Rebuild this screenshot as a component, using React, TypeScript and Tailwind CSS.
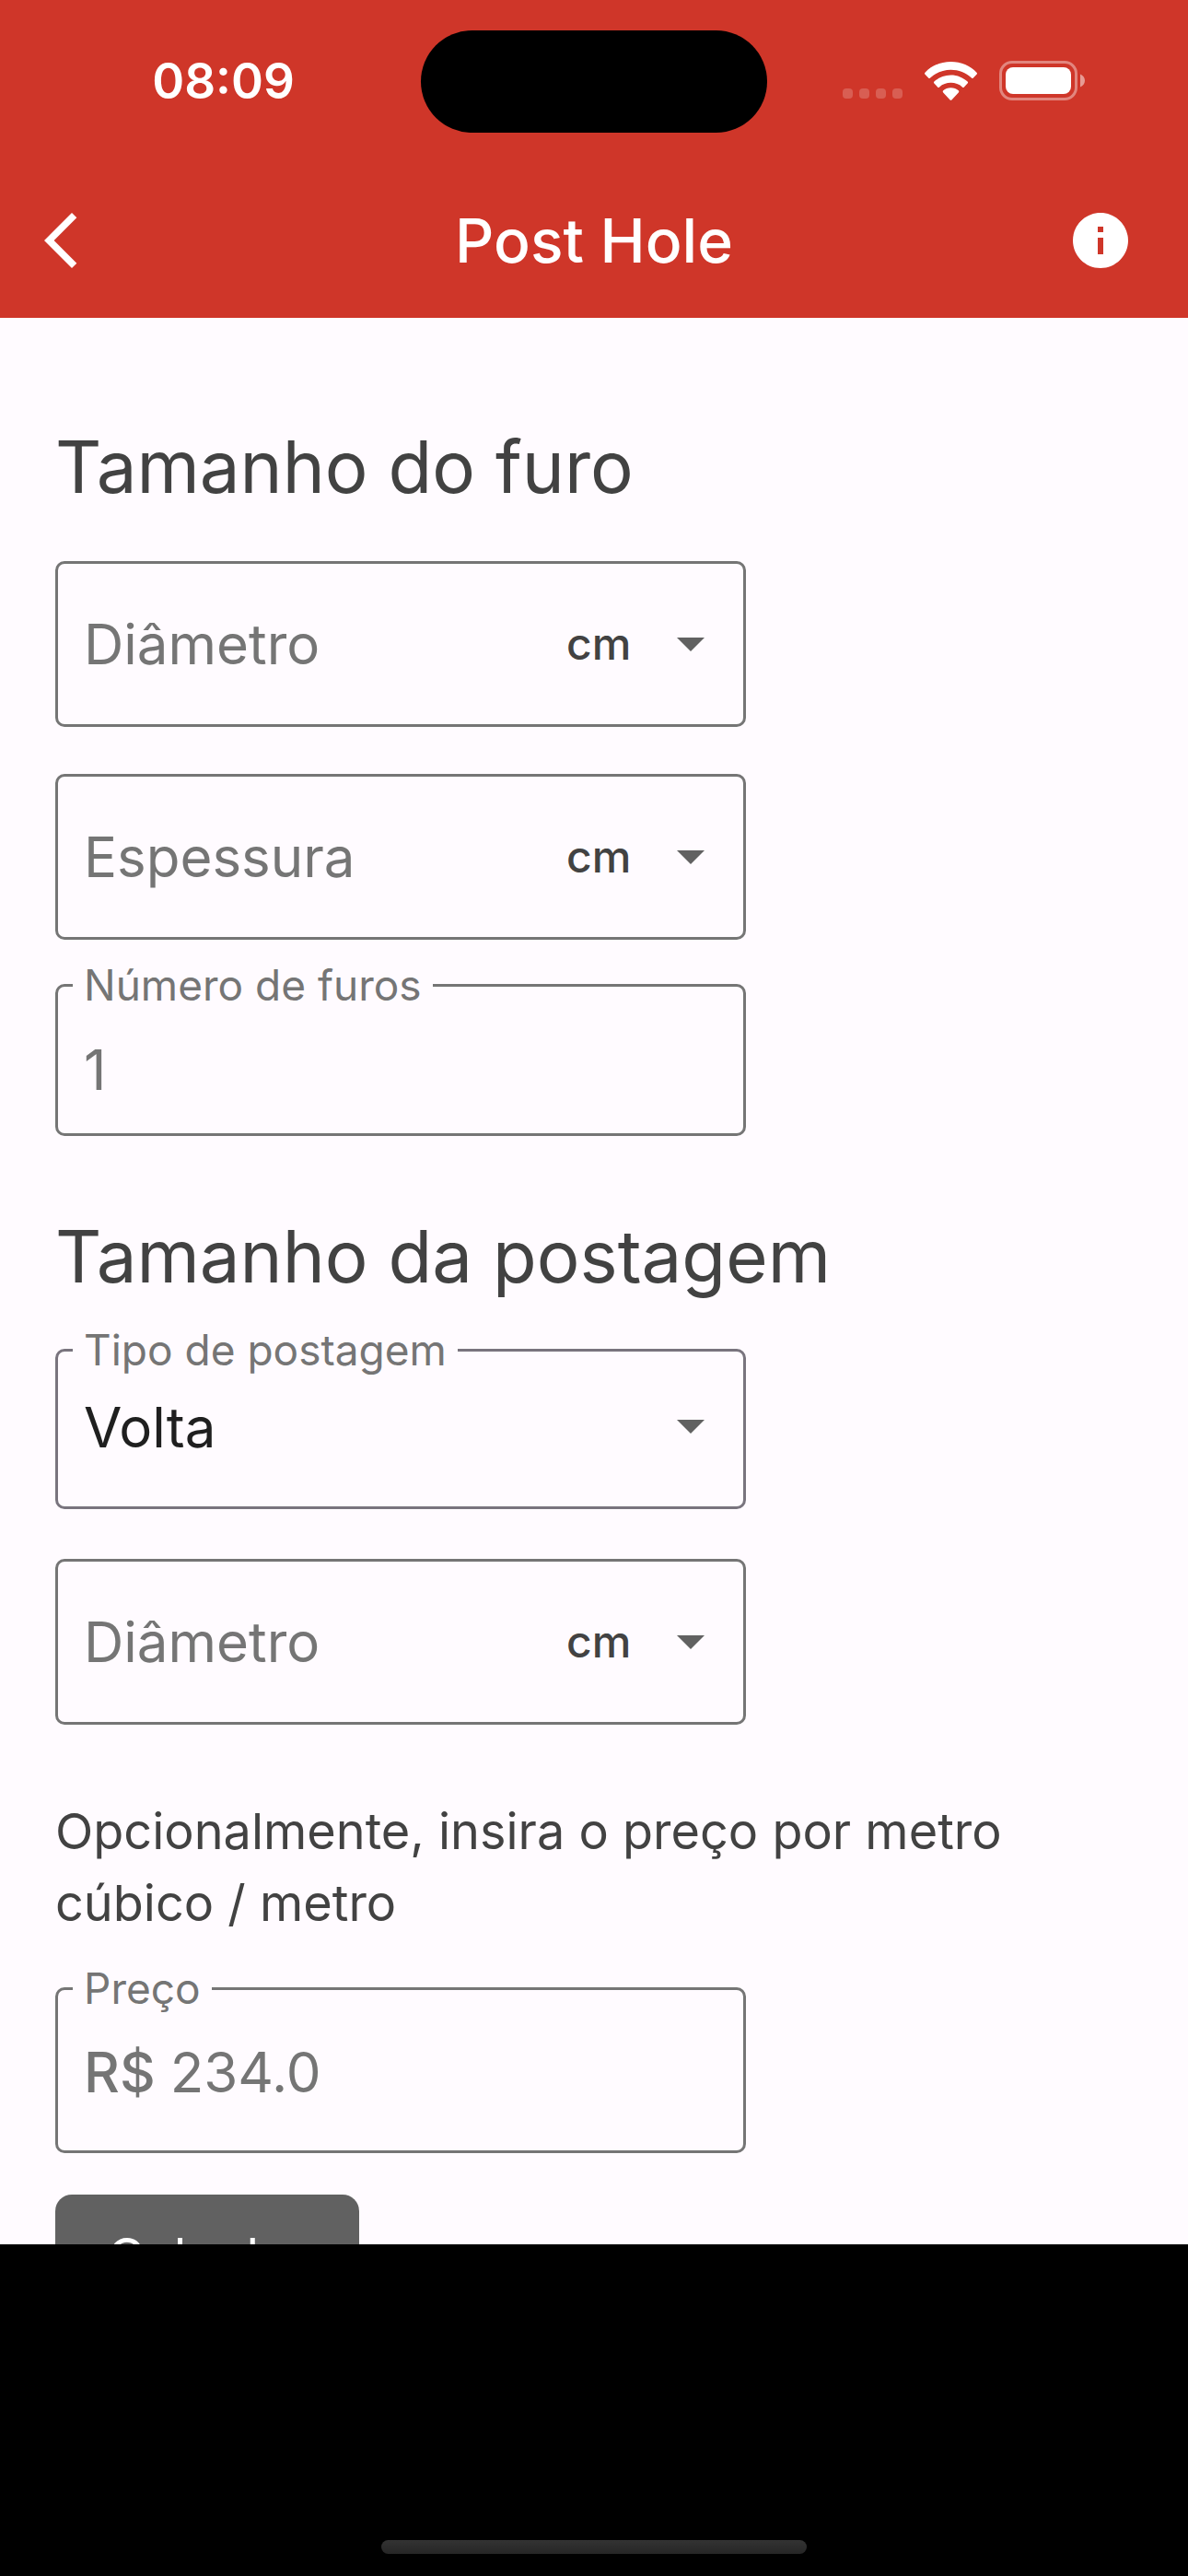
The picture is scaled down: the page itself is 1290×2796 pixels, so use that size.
import type { ReactNode } from "react";
import { MdArrowBackIosNew, MdInfo } from "react-icons/md";

const lengthUnits = ["cm", "m", "mm", "in", "ft"];
const postTypes = ["Volta", "Quadrado", "Retângulo"];

function StatusBar() {
  return (
    <div className="grid h-[177px] grid-cols-[1fr_376px_1fr] items-center">
      <span className="pb-0.5 pl-7 text-center text-[53px] leading-[60px] font-semibold">08:09</span>
      <div className="h-[111px] rounded-full bg-black" />
      <div className="flex items-center justify-center gap-6 pr-[30px] pb-0.5">
        <div className="flex gap-[7px] pt-7">
          {Array.from({ length: 4 }).map((_, i) => (
            <span key={i} className="size-[11px] rounded-[4px] bg-white/20" />
          ))}
        </div>
        <svg viewBox="0 0 57 42" className="h-[42px] w-[57px] fill-white" aria-hidden="true">
          <path d="M28.5 0C39.5 0 49.600 4.200 56.500 11.700q1 1 0 2.100l-3.600 3.700q-1 1-2 0C44.800 11.900 37 8.700 28.500 8.700S12.200 11.900 6.100 17.500q-1 1-2 0L.5 13.800q-1-1.100 0-2.100C7.400 4.200 17.500 0 28.500 0z" />
          <path d="M28.500 14.400c7 0 13.300 2.600 18.100 7.200q1 1 0 2l-3.700 3.800q-1 1-2 0c-3.400-3-7.700-4.600-12.400-4.600s-9 1.600-12.400 4.600q-1 1-2 0l-3.700-3.800q-1-1 0-2c4.800-4.600 11.100-7.200 18.100-7.200z" />
          <path d="M28.500 28.300c3.200 0 6.100 1.100 8.300 3q1 1 0 2.100l-7.200 7.800q-1.100 1.100-2.200 0l-7.200-7.800q-1-1.100 0-2.100c2.200-1.900 5.100-3 8.300-3z" />
        </svg>
        <svg viewBox="0 0 93 43" className="h-[43px] w-[93px]" aria-hidden="true">
          <rect x="1.500" y="1.500" width="82" height="40" rx="12.500" fill="none" stroke="#fff" strokeOpacity=".4" strokeWidth="3" />
          <rect x="7" y="7" width="71" height="29" rx="8" fill="#fff" />
          <path d="M88 14.500c3 1.200 5 4 5 7s-2 5.800-5 7z" fill="#fff" fillOpacity=".5" />
        </svg>
      </div>
    </div>
  );
}

function AppBar() {
  return (
    <div className="grid h-42 grid-cols-[1fr_auto_1fr] items-center px-[30px]">
      <button type="button" aria-label="Voltar" className="size-18">
        <MdArrowBackIosNew className="size-18" />
      </button>
      <h1 className="text-[66px] leading-[84px] font-medium">Post Hole</h1>
      <button type="button" aria-label="Informações" className="mr-[29px] size-18 justify-self-end">
        <MdInfo className="size-18" />
      </button>
    </div>
  );
}

function Caret() {
  return (
    <svg viewBox="0 0 30 15" className="pointer-events-none absolute right-0 h-[15px] w-[30px] fill-[#616161]" aria-hidden="true">
      <path d="M0 0h30L15 15z" />
    </svg>
  );
}

function UnitField({ id, label }: { id: string; label: string }) {
  return (
    <div className="flex h-45 w-full max-w-[750px] items-center rounded-[10px] border-3 border-[#757575] pr-[42px] pl-7">
      <input
        id={id}
        aria-label={label}
        placeholder={label}
        className="min-w-0 flex-1 text-[60px] leading-[72px] outline-none placeholder:text-[#757575]"
      />
      <div className="relative flex items-center">
        <select
          aria-label={`Unidade: ${label}`}
          className="w-[150px] appearance-none text-[48px] leading-[60px] font-medium text-[#424242] outline-none"
        >
          {lengthUnits.map((unit) => (
            <option key={unit}>{unit}</option>
          ))}
        </select>
        <Caret />
      </div>
    </div>
  );
}

// Legend is 57px tall, so the border line sits 27px below the top of the fieldset
function OutlinedField({ id, label, className, children }: { id: string; label: string; className: string; children: ReactNode }) {
  return (
    <fieldset className={`w-full max-w-[750px] min-w-0 rounded-[10px] border-3 pr-[42px] pl-4 ${className}`}>
      <legend className="px-3 text-[46px] leading-[57px] text-[#757575]">
        <label htmlFor={id}>{label}</label>
      </legend>
      {children}
    </fieldset>
  );
}

export default function App() {
  return (
    <div className="flex h-screen flex-col bg-black [font-family:Inter,'Liberation_Sans',sans-serif]">
      <header className="shrink-0 bg-[#cf3629] text-white">
        <StatusBar />
        <AppBar />
      </header>

      <main className="min-h-0 flex-1 overflow-hidden bg-[#fffbff] px-15 pt-[114px] text-[#424242]">
        <h2 className="text-[78px] leading-24">Tamanho do furo</h2>
        <div className="mt-[54px]">
          <UnitField id="hole-diameter" label="Diâmetro" />
        </div>
        <div className="mt-[51px]">
          <UnitField id="hole-depth" label="Espessura" />
        </div>
        <OutlinedField id="hole-count" label="Número de furos" className="mt-[21px] border-[#757575]">
          <div className="flex h-33 items-center pb-1.5 pl-3">
            <input
              id="hole-count"
              placeholder="1"
              className="w-full text-[60px] leading-[72px] outline-none placeholder:text-[#757575]"
            />
          </div>
        </OutlinedField>

        <h2 className="mt-[83px] text-[78px] leading-24">Tamanho da postagem</h2>
        <OutlinedField id="post-type" label="Tipo de postagem" className="mt-[25px] border-[#79747e]">
          <div className="relative flex h-[141px] items-center pb-8 pl-3">
            <select id="post-type" className="w-full appearance-none text-[60px] leading-[72px] text-[#1f1f1f] outline-none">
              {postTypes.map((type) => (
                <option key={type}>{type}</option>
              ))}
            </select>
            <Caret />
          </div>
        </OutlinedField>
        <div className="mt-[54px]">
          <UnitField id="post-diameter" label="Diâmetro" />
        </div>

        <p className="mt-[77px] text-[54px] leading-[78px]">
          Opcionalmente, insira o preço por metro cúbico / metro
        </p>
        <OutlinedField id="price" label="Preço" className="mt-[25px] border-[#757575]">
          <div className="flex h-[147px] items-center gap-4 pb-6 pl-3 text-[60px] leading-[72px] text-[#757575]">
            <span className="font-medium">R$</span>
            <input
              id="price"
              placeholder="234.0"
              className="min-w-0 flex-1 outline-none placeholder:text-[#757575]"
            />
          </div>
        </OutlinedField>
        <button type="button" className="mt-[45px] h-34 w-[330px] rounded-[18px] bg-[#616161] text-[56px] leading-[60px] text-white">
          Calcular
        </button>
      </main>

      <footer className="flex h-90 shrink-0 items-end justify-center pb-6">
        <div className="h-[15px] w-[462px] rounded-full bg-linear-to-b from-[#333333] to-[#262626]" />
      </footer>
    </div>
  );
}
